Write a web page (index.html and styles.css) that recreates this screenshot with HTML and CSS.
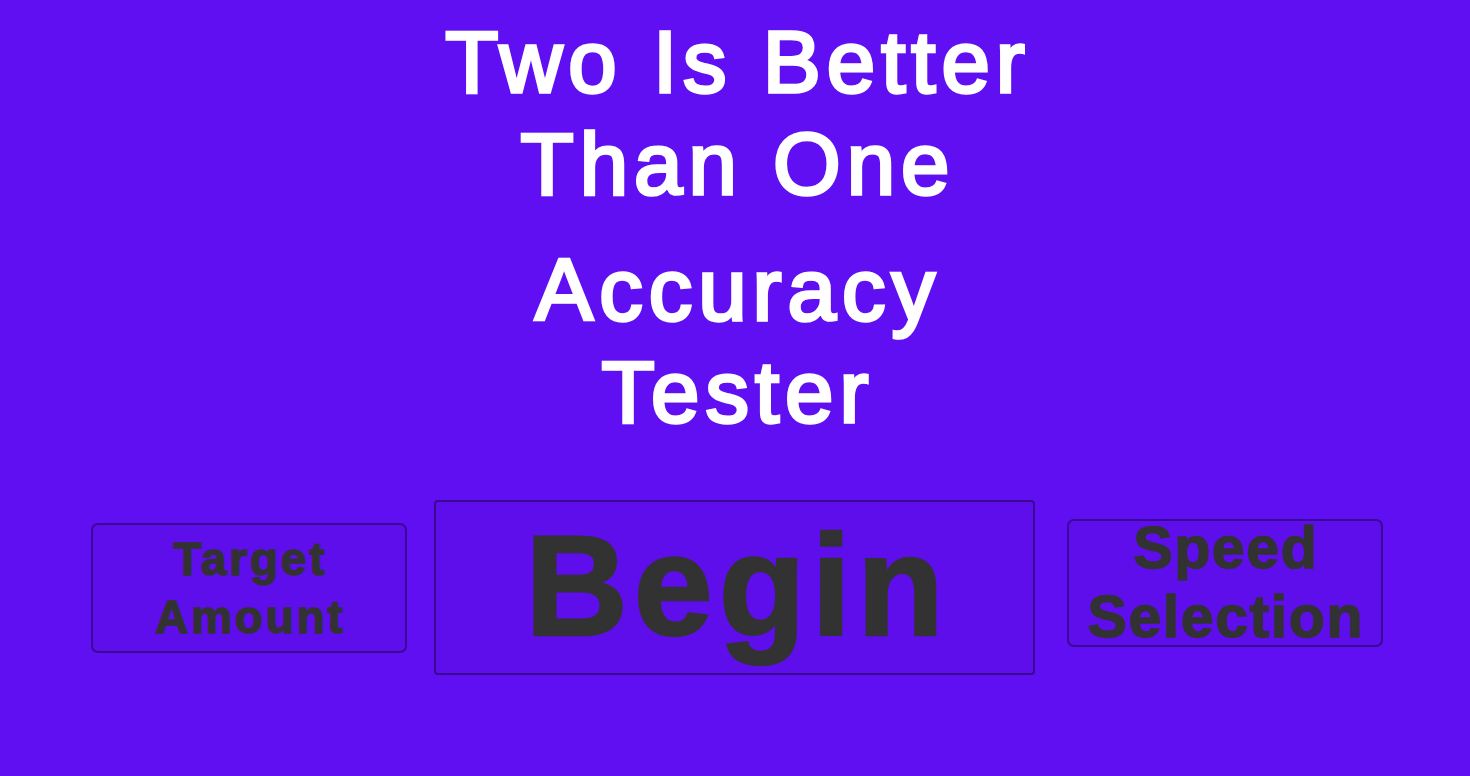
FILE: index.html
```html
<!DOCTYPE html>
<html lang="en">
<head>
<meta charset="utf-8">
<title>Two Is Better Than One</title>
<link rel="stylesheet" href="styles.css">
</head>
<body>
<main class="screen">
  <h1 class="title">Two Is Better<br>Than One</h1>
  <h2 class="subtitle">Accuracy<br>Tester</h2>
  <div class="actions">
    <button class="btn btn-side btn-target"><span class="label">Target<br>Amount</span></button>
    <button class="btn btn-begin"><span class="label">Begin</span></button>
    <button class="btn btn-side btn-speed"><span class="label">Speed<br>Selection</span></button>
  </div>
</main>
</body>
</html>
```
FILE: styles.css
```css
html, body {
  margin: 0;
  padding: 0;
  height: 100%;
}

body {
  background: #5f0ff2;
  overflow: hidden;
  font-family: "Liberation Sans", Arial, sans-serif;
}

.screen {
  display: flex;
  flex-direction: column;
  align-items: center;
  padding-top: 11px;
}

.title,
.subtitle {
  margin: 0;
  color: #ffffff;
  font-weight: 400;
  font-size: 87px;
  line-height: 102px;
  letter-spacing: 6px;
  padding-left: 6px;
  text-align: center;
  -webkit-text-stroke: 3.4px #ffffff;
}

.subtitle {
  margin-top: 24px;
}

.actions {
  align-self: stretch;
  display: flex;
  align-items: center;
  padding-left: 91px;
  margin-top: 57px;
}

.btn {
  box-sizing: border-box;
  display: flex;
  align-items: center;
  justify-content: center;
  margin: 0;
  padding: 0;
  background: #5d0eea;
  border: 2px solid rgba(45, 5, 110, 0.7);
  color: #333233;
  font-family: "Liberation Sans", Arial, sans-serif;
  font-weight: 700;
  text-align: center;
  overflow: visible;
  white-space: nowrap;
  -webkit-text-stroke: 1.4px #333233;
}

.btn-side {
  width: 316px;
  border-radius: 7px;
}

.btn-target {
  height: 130px;
  font-size: 46px;
  line-height: 58px;
  letter-spacing: 2.8px;
}

.btn-target .label {
  padding-left: 2.8px;
}

.btn-begin {
  width: 601px;
  height: 175px;
  margin-left: 27px;
  margin-right: 32px;
  border-radius: 4px;
  font-size: 142px;
  line-height: 160px;
  letter-spacing: 6px;
  padding-bottom: 4px;
  -webkit-text-stroke: 2.6px #333233;
}

.btn-begin .label {
  padding-left: 6px;
}

.btn-speed {
  height: 128px;
  margin-bottom: 9px;
  font-size: 59px;
  line-height: 69px;
  letter-spacing: 1.6px;
}

.btn-speed .label {
  padding-left: 1.6px;
}
```
